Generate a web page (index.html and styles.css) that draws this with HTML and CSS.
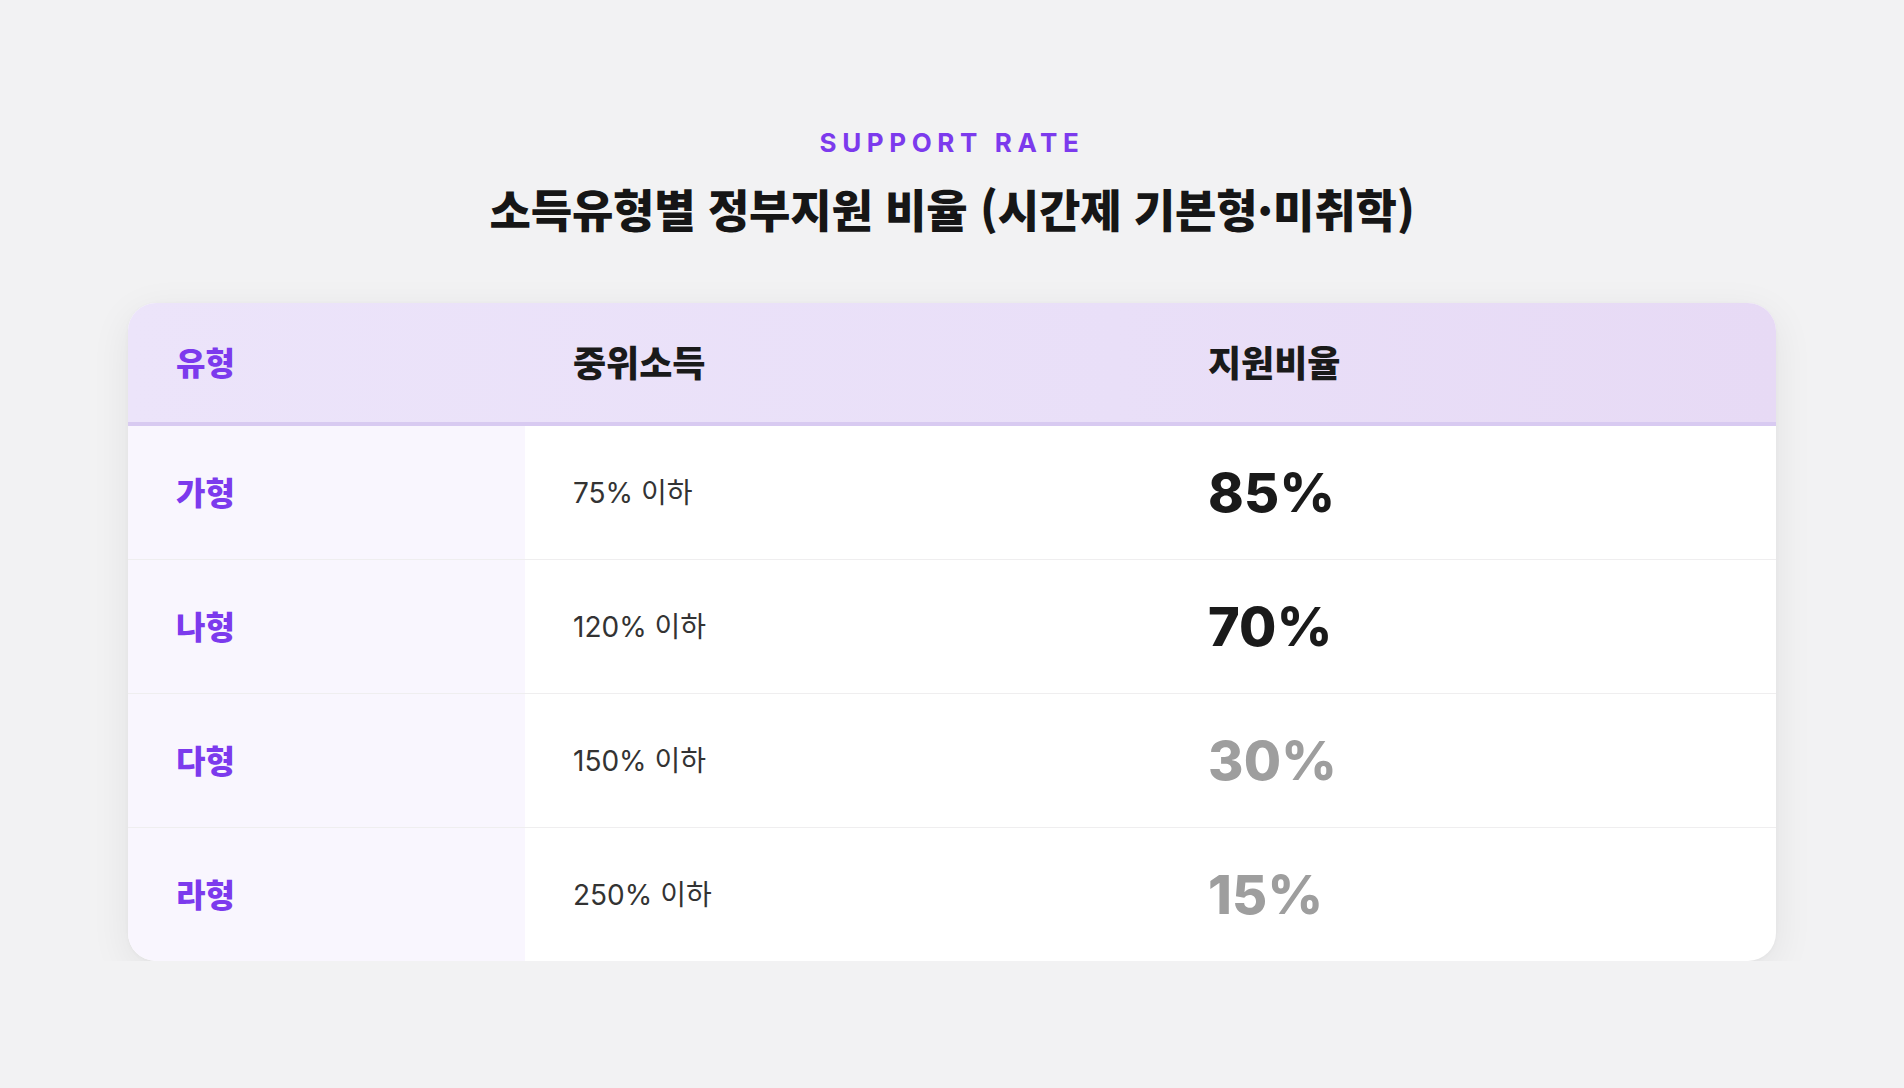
FILE: index.html
```html
<!DOCTYPE html>
<html lang="ko">
<head>
<meta charset="utf-8">
<title>소득유형별 정부지원 비율</title>
<link rel="stylesheet" href="styles.css">
</head>
<body>
<main class="page">
  <p class="eyebrow">SUPPORT RATE</p>
  <h1 class="title">소득유형별 정부지원 비율 (시간제 기본형·미취학)</h1>
  <section class="card">
    <div class="row head">
      <div class="cell type">유형</div>
      <div class="cell">중위소득</div>
      <div class="cell">지원비율</div>
    </div>
    <div class="row">
      <div class="cell type">가형</div>
      <div class="cell income">75% 이하</div>
      <div class="cell rate">85%</div>
    </div>
    <div class="row">
      <div class="cell type">나형</div>
      <div class="cell income">120% 이하</div>
      <div class="cell rate">70%</div>
    </div>
    <div class="row">
      <div class="cell type">다형</div>
      <div class="cell income">150% 이하</div>
      <div class="cell rate muted">30%</div>
    </div>
    <div class="row">
      <div class="cell type">라형</div>
      <div class="cell income">250% 이하</div>
      <div class="cell rate muted">15%</div>
    </div>
  </section>
</main>
</body>
</html>
```

FILE: styles.css
```css
* { box-sizing: border-box; }

html, body {
  margin: 0;
  padding: 0;
}

body {
  background: #f2f2f3;
  font-family: "Noto Sans CJK KR", "Noto Sans", sans-serif;
  color: #1a1a1a;
}

.page {
  display: flex;
  flex-direction: column;
  align-items: center;
  padding-top: 127px;
}

.eyebrow {
  margin: 0;
  font-family: "Inter", "Noto Sans CJK KR", sans-serif;
  font-size: 26px;
  line-height: 32px;
  font-weight: 700;
  letter-spacing: 5.6px;
  color: #7c3aed;
}

.title {
  margin: 23px 0 0;
  font-size: 45px;
  line-height: 54px;
  font-weight: 900;
  letter-spacing: -0.2px;
  color: #161616;
}

.card {
  margin-top: 67px;
  width: 1648px;
  background: #ffffff;
  border-radius: 28px;
  overflow: hidden;
  box-shadow: 0 10px 40px rgba(0, 0, 0, 0.07), 0 1px 4px rgba(0, 0, 0, 0.03);
}

.row {
  display: grid;
  grid-template-columns: 397px 635px 1fr;
  height: 133px;
}

.row + .row {
  height: 134px;
  border-top: 1px solid #efeeef;
}

.row.head {
  height: 123px;
  background: linear-gradient(90deg, #ece4fa 0%, #e9dff8 60%, #e7daf5 100%);
  border-bottom: 4px solid #d8caf1;
}

.row.head + .row {
  height: 133px;
  border-top: none;
}

.cell {
  display: flex;
  align-items: center;
  padding-left: 48px;
}

.head .cell {
  font-size: 36px;
  font-weight: 900;
  color: #1a1a1a;
  padding-bottom: 4px;
}

.head .cell.type {
  color: #7c3aed;
  background: transparent;
}

.cell.type {
  font-size: 32px;
  font-weight: 900;
  color: #7c3aed;
  background: #f9f6fe;
  padding-bottom: 4px;
}

.cell.income {
  font-family: "Inter", "Noto Sans CJK KR", sans-serif;
  font-size: 28px;
  font-weight: 400;
  color: #333333;
  padding-bottom: 3px;
}

.cell.rate {
  font-family: "Inter", "Noto Sans CJK KR", sans-serif;
  font-size: 54px;
  font-weight: 800;
  letter-spacing: 0.2px;
  color: #1a1a1a;
}

.cell.rate.muted {
  color: #9e9e9e;
}
```
